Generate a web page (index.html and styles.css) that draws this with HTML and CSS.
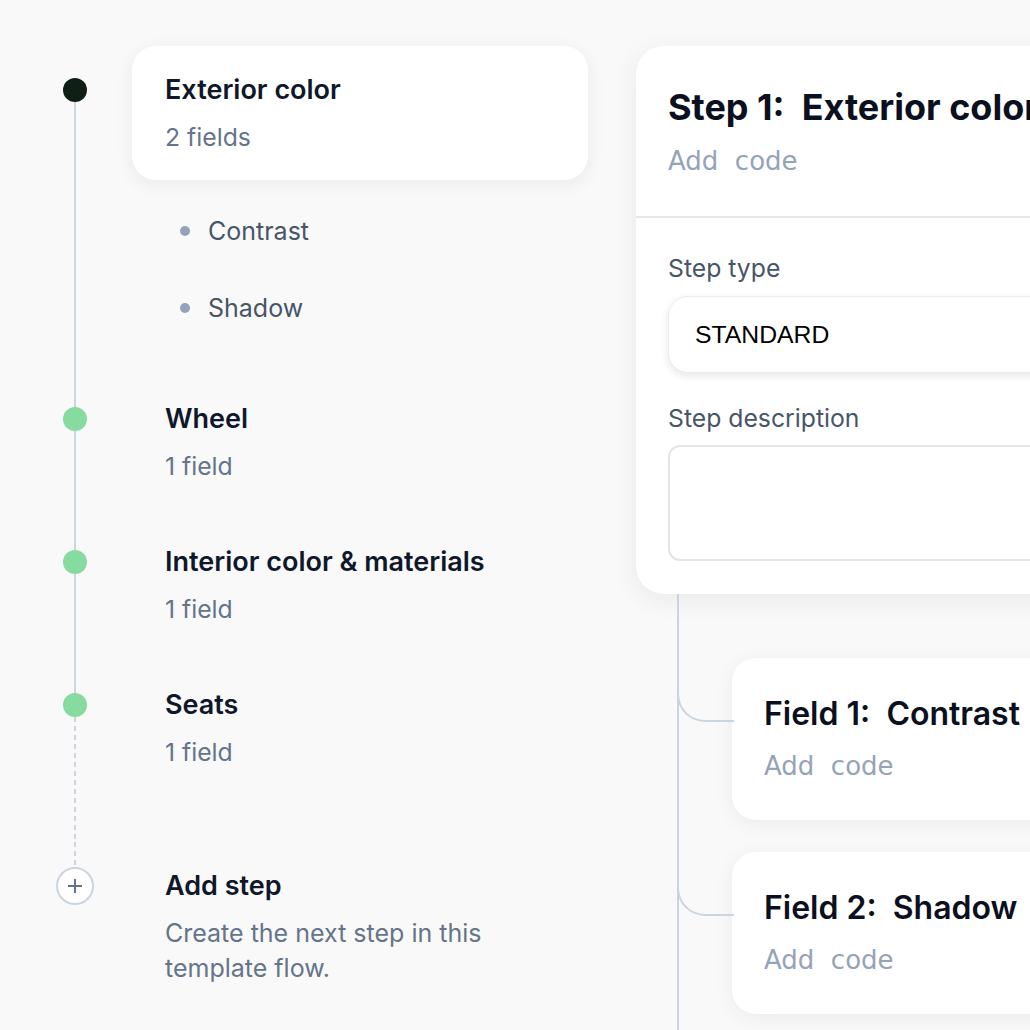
FILE: index.html
```html
<!DOCTYPE html>
<html lang="en">
<head>
<meta charset="utf-8">
<title>Template flow</title>
<link rel="stylesheet" href="styles.css">
</head>
<body>
<div class="page">
  <div class="steps">
    <div class="step step-first">
      <div class="rail"><span class="seg seg-top seg-none"></span><span class="dot dot-dark"></span><span class="seg seg-bottom"></span></div>
      <div class="step-body">
        <div class="step-card step-card-active">
          <div class="step-title">Exterior color</div>
          <div class="step-sub">2 fields</div>
        </div>
        <ul class="sub-list">
          <li class="sub-item"><span class="bullet"></span>Contrast</li>
          <li class="sub-item"><span class="bullet"></span>Shadow</li>
        </ul>
      </div>
    </div>
    <div class="step step-mid">
      <div class="rail"><span class="seg seg-top"></span><span class="dot dot-green"></span><span class="seg seg-bottom"></span></div>
      <div class="step-body">
        <div class="step-card">
          <div class="step-title">Wheel</div>
          <div class="step-sub">1 field</div>
        </div>
      </div>
    </div>
    <div class="step step-mid">
      <div class="rail"><span class="seg seg-top"></span><span class="dot dot-green"></span><span class="seg seg-bottom"></span></div>
      <div class="step-body">
        <div class="step-card">
          <div class="step-title">Interior color &amp; materials</div>
          <div class="step-sub">1 field</div>
        </div>
      </div>
    </div>
    <div class="step step-last">
      <div class="rail"><span class="seg seg-top"></span><span class="dot dot-green"></span><span class="seg seg-bottom seg-dashed"></span></div>
      <div class="step-body">
        <div class="step-card">
          <div class="step-title">Seats</div>
          <div class="step-sub">1 field</div>
        </div>
      </div>
    </div>
    <div class="step step-add">
      <div class="rail"><span class="seg seg-top-add seg-dashed"></span>
        <span class="add-circle"><svg width="18" height="18" viewBox="0 0 18 18"><path d="M9 2v14M2 9h14" stroke="#64748b" stroke-width="2" fill="none"/></svg></span>
      </div>
      <div class="step-body">
        <div class="step-card">
          <div class="step-title">Add step</div>
          <div class="add-desc">Create the next step in this template flow.</div>
        </div>
      </div>
    </div>
  </div>

  <div class="editor">
    <div class="editor-card">
      <div class="editor-head">
        <div class="editor-title">Step 1:&nbsp; Exterior color</div>
        <div class="code">Add&nbsp; code</div>
      </div>
      <div class="editor-body">
        <div class="label">Step type</div>
        <div class="select">STANDARD</div>
        <div class="label label-desc">Step description</div>
        <div class="textarea"></div>
      </div>
    </div>
    <div class="fields">
      <div class="field-row">
        <div class="field-card">
          <div class="field-title">Field 1:&nbsp; Contrast</div>
          <div class="code">Add&nbsp; code</div>
        </div>
      </div>
      <div class="field-row">
        <div class="field-card">
          <div class="field-title">Field 2:&nbsp; Shadow</div>
          <div class="code">Add&nbsp; code</div>
        </div>
      </div>
    </div>
  </div>
</div>
</body>
</html>
```

FILE: styles.css
```css
* { box-sizing: border-box; }
html, body {
  margin: 0;
  padding: 0;
  background: #f9f9f9;
  overflow: hidden;
  height: 1030px;
}
body {
  font-family: Inter, "Noto Sans", sans-serif;
  color: #0f172a;
}
.page {
  display: flex;
  align-items: flex-start;
  gap: 48px;
  padding: 46px 0 0 56px;
  width: 1300px;
}
.steps {
  width: 532px;
  flex: none;
  display: flex;
  flex-direction: column;
}
.step {
  display: flex;
  gap: 38px;
}
.rail {
  width: 38px;
  flex: none;
  display: flex;
  flex-direction: column;
  align-items: center;
}
.seg {
  width: 2px;
  background: #cbd5e1;
  flex: none;
}
.seg-top { height: 32px; }
.seg-none { background: transparent; }
.seg-bottom { flex: 1; }
.seg-top-add { height: 25px; }
.seg-dashed {
  background: repeating-linear-gradient(to bottom, #cbd5e1 0 5px, transparent 5px 9px);
}
.dot {
  width: 24px;
  height: 24px;
  border-radius: 50%;
  flex: none;
}
.dot-dark { background: #0f1f15; }
.dot-green { background: #88dba0; }
.add-circle {
  width: 38px;
  height: 38px;
  border-radius: 50%;
  border: 2px solid #cbd5e1;
  background: #fff;
  display: flex;
  align-items: center;
  justify-content: center;
  flex: none;
}
.step-body {
  flex: 1;
  min-width: 0;
}
.step-first .step-body { padding-bottom: 51px; }
.step-mid .step-body { padding-bottom: 9px; }
.step-last .step-body { padding-bottom: 47px; }
.step-card {
  padding: 28px 33px 27px;
  border-radius: 24px;
}
.step-card-active {
  background: #fff;
  box-shadow: 0 4px 18px rgba(15, 23, 42, 0.07);
}
.step-title {
  font-size: 27px;
  line-height: 32px;
  font-weight: 600;
  color: #0f172a;
}
.step-sub {
  margin-top: 15px;
  font-size: 24.75px;
  line-height: 32px;
  color: #64748b;
}
.add-desc {
  margin-top: 14px;
  font-size: 25px;
  line-height: 35px;
  color: #64748b;
}
.sub-list {
  list-style: none;
  margin: 35px 0 0;
  padding: 0 0 0 48px;
  display: flex;
  flex-direction: column;
  gap: 45px;
}
.sub-item {
  display: flex;
  align-items: center;
  gap: 18px;
  font-size: 25px;
  line-height: 32px;
  color: #475569;
}
.bullet {
  width: 10px;
  height: 10px;
  border-radius: 50%;
  background: #94a3b8;
  flex: none;
}
.editor {
  width: 620px;
  flex: none;
}
.editor-card {
  background: #fff;
  border-radius: 28px;
  box-shadow: 0 6px 26px rgba(15, 23, 42, 0.07);
}
.editor-head {
  padding: 39px 32px 39px;
  border-bottom: 2px solid #e5e7eb;
}
.editor-title {
  font-size: 36px;
  line-height: 44px;
  font-weight: 700;
  color: #0b1020;
  white-space: nowrap;
}
.code {
  margin-top: 16px;
  font-family: "DejaVu Sans", sans-serif;
  font-size: 26px;
  line-height: 32px;
  color: #94a3b8;
  white-space: nowrap;
}
.editor-body {
  padding: 35px 32px 33px;
}
.label {
  font-size: 24.75px;
  line-height: 30px;
  color: #475569;
}
.label-desc { margin-top: 30px; }
.select {
  margin-top: 13px;
  height: 77px;
  border: 1px solid #ececf0;
  border-radius: 20px;
  background: #fff;
  box-shadow: 0 3px 8px rgba(15, 23, 42, 0.1);
  display: flex;
  align-items: center;
  padding-left: 26px;
  font-family: "Liberation Sans", Arial, sans-serif;
  font-size: 24.75px;
  color: #000;
}
.textarea {
  margin-top: 12px;
  height: 116px;
  border: 2px solid #e4e4ea;
  border-radius: 12px;
  background: #fff;
}
.fields {
  margin-left: 41px;
  border-left: 2px solid #cbd5e1;
  padding: 64px 0 60px 53px;
  display: flex;
  flex-direction: column;
  gap: 32px;
}
.field-row {
  position: relative;
}
.field-row::before {
  content: "";
  position: absolute;
  left: -55px;
  top: 32px;
  width: 55px;
  height: 30px;
  border-left: 2px solid #cbd5e1;
  border-bottom: 2px solid #cbd5e1;
  border-bottom-left-radius: 28px;
}
.field-card {
  background: #fff;
  border-radius: 24px;
  box-shadow: 0 4px 20px rgba(15, 23, 42, 0.06);
  padding: 36px 32px 38px;
}
.field-title {
  font-size: 32px;
  line-height: 40px;
  font-weight: 600;
  color: #0b1020;
  white-space: nowrap;
}
```
